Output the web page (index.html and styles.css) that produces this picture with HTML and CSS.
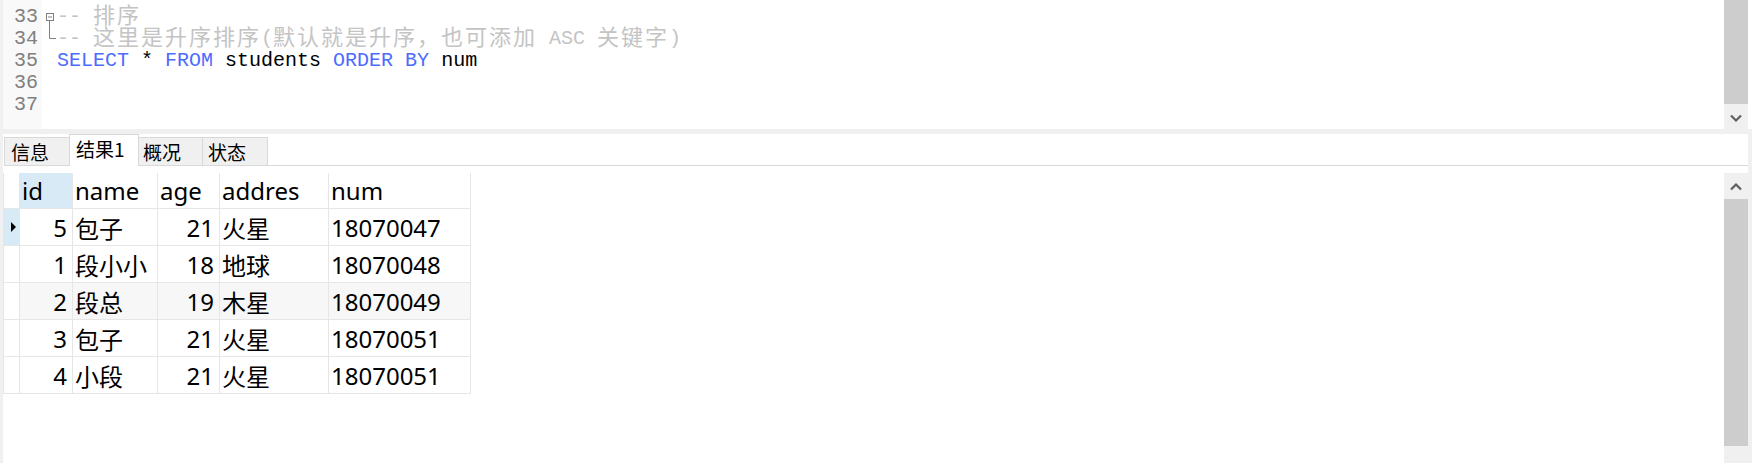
FILE: index.html
```html
<!DOCTYPE html>
<html lang="zh">
<head>
<meta charset="utf-8">
<title>Query</title>
<link rel="stylesheet" href="styles.css">
</head>
<body>
<div class="editor">
  <div class="editor-body">
    <div class="gutter">
      <div class="ln">32</div>
      <div class="ln">33</div>
      <div class="ln">34</div>
      <div class="ln">35</div>
      <div class="ln">36</div>
      <div class="ln">37</div>
    </div>
    <div class="folds">
      <div class="fl"></div>
      <div class="fl"><svg width="15" height="22" viewBox="0 0 15 22"><rect x="4.5" y="7.5" width="7" height="7" fill="#fff" stroke="#808080"/><line x1="6" y1="11" x2="10" y2="11" stroke="#808080"/><line x1="7.5" y1="15" x2="7.5" y2="22" stroke="#808080"/></svg></div>
      <div class="fl"><svg width="15" height="22" viewBox="0 0 15 22"><polyline points="7.5,0 7.5,10.5 14,10.5" fill="none" stroke="#808080"/></svg></div>
    </div>
    <div class="code">
      <div class="line"></div>
      <div class="line cm">-- <span class="cj">排序</span></div>
      <div class="line cm">-- <span class="cj">这里是升序排序</span>(<span class="cj">默认就是升序，也可添加</span> ASC <span class="cj">关键字</span>)</div>
      <div class="line"><span class="kw">SELECT</span> * <span class="kw">FROM</span> students <span class="kw">ORDER</span> <span class="kw">BY</span> num</div>
      <div class="line"></div>
      <div class="line"></div>
    </div>
  </div>
  <div class="vscroll">
    <div class="thumb thumb-top"></div>
    <div class="arrow arrow-down"><svg width="12" height="8" viewBox="0 0 12 8"><polyline points="1,1.5 6,6.5 11,1.5" fill="none" stroke="#606060" stroke-width="2.2"/></svg></div>
  </div>
  <div class="edge"></div>
</div>

<div class="lower">
  <div class="tabs">
    <div class="tab t1">信息</div>
    <div class="tab t2 active">结果1</div>
    <div class="tab t3">概况</div>
    <div class="tab t4">状态</div>
    <div class="tab-fill"></div>
  </div>
  <div class="results">
    <div class="grid-wrap">
      <div class="grid">
        <div class="row head">
          <div class="cell ind"></div>
          <div class="cell sel">id</div>
          <div class="cell">name</div>
          <div class="cell">age</div>
          <div class="cell">addres</div>
          <div class="cell">num</div>
        </div>
        <div class="row">
          <div class="cell ind cur"><svg width="15" height="36" viewBox="0 0 15 36"><polygon points="7,13 12,18 7,23" fill="#000"/></svg></div>
          <div class="cell num">5</div>
          <div class="cell">包子</div>
          <div class="cell num">21</div>
          <div class="cell">火星</div>
          <div class="cell">18070047</div>
        </div>
        <div class="row">
          <div class="cell ind"></div>
          <div class="cell num">1</div>
          <div class="cell">段小小</div>
          <div class="cell num">18</div>
          <div class="cell">地球</div>
          <div class="cell">18070048</div>
        </div>
        <div class="row alt">
          <div class="cell ind"></div>
          <div class="cell num">2</div>
          <div class="cell">段总</div>
          <div class="cell num">19</div>
          <div class="cell">木星</div>
          <div class="cell">18070049</div>
        </div>
        <div class="row">
          <div class="cell ind"></div>
          <div class="cell num">3</div>
          <div class="cell">包子</div>
          <div class="cell num">21</div>
          <div class="cell">火星</div>
          <div class="cell">18070051</div>
        </div>
        <div class="row">
          <div class="cell ind"></div>
          <div class="cell num">4</div>
          <div class="cell">小段</div>
          <div class="cell num">21</div>
          <div class="cell">火星</div>
          <div class="cell">18070051</div>
        </div>
      </div>
    </div>
    <div class="vscroll2">
      <div class="arrow arrow-up"><svg width="12" height="8" viewBox="0 0 12 8"><polyline points="1,6.5 6,1.5 11,6.5" fill="none" stroke="#606060" stroke-width="2.2"/></svg></div>
      <div class="thumb thumb-low"></div>
      <div class="track"></div>
    </div>
  </div>
</div>
</body>
</html>
```

FILE: styles.css
```css
* { box-sizing: border-box; }

html, body {
  margin: 0;
  padding: 0;
}

body {
  width: 1752px;
  height: 463px;
  overflow: hidden;
  background: #f0f0f0;
}

/* ---------- editor ---------- */
.editor {
  display: flex;
  height: 129px;
  margin-left: 3px;
  background: #ffffff;
  overflow: hidden;
}

.editor-body {
  flex: 1;
  display: flex;
  height: 145px;
  margin-top: -16px;
  font-family: "Liberation Mono", "Noto Sans CJK SC", monospace;
  font-size: 20px;
  line-height: 22px;
}

.gutter {
  width: 39px;
  padding-right: 4px;
  background: #f9f9f9;
  color: #808080;
  text-align: right;
}

.ln {
  height: 22px;
}

.folds {
  width: 15px;
}

.fl {
  height: 22px;
}

.fl svg {
  display: block;
}

.code {
  flex: 1;
  color: #000;
}

.line {
  height: 22px;
  white-space: pre;
}

.cm {
  color: #c4c4c4;
}

.cj {
  font-family: "Noto Sans CJK SC", sans-serif;
  font-size: 22px;
  letter-spacing: 2px;
  line-height: 0;
  vertical-align: -1px;
}

.kw {
  color: #4d6cff;
}

.vscroll {
  width: 24px;
  display: flex;
  flex-direction: column;
}

.thumb {
  background: #cdcdcd;
}

.thumb-top {
  height: 104px;
}

.arrow {
  display: flex;
  align-items: center;
  justify-content: center;
  background: #f0f0f0;
}

.arrow svg {
  display: block;
}

.arrow-down {
  flex: 1;
  padding-top: 2px;
}

.edge {
  width: 4px;
  background: #ffffff;
}

/* ---------- lower pane ---------- */
.lower {
  margin: 5px 4px 0 3px;
  height: 329px;
  background: #ffffff;
  display: flex;
  flex-direction: column;
}

.tabs {
  display: flex;
  align-items: flex-end;
  height: 32px;
  padding-left: 1px;
  font-family: "Noto Sans CJK SC", sans-serif;
  font-size: 19px;
  color: #000;
}

.tab {
  height: 29px;
  border: 1px solid #d9d9d9;
  background: #f0f0f0;
  display: flex;
  align-items: center;
  margin-right: -1px;
  white-space: nowrap;
}

.t1 { width: 66px; padding-left: 6px; }
.t2 { width: 70px; padding-left: 6px; }
.t3 { width: 65px; padding-left: 4px; }
.t4 { width: 66px; padding-left: 5px; }

.tab.active {
  height: 32px;
  background: #ffffff;
  border-bottom: none;
  padding-bottom: 5px;
}

.tab-fill {
  flex: 1;
  height: 32px;
  border-bottom: 1px solid #d9d9d9;
}

.results {
  flex: 1;
  display: flex;
  padding-top: 7px;
  min-height: 0;
}

.grid-wrap {
  flex: 1;
}

.grid {
  width: 468px;
  border-left: 1px solid #e6e6e6;
  font-family: "Noto Sans", "Noto Sans CJK SC", sans-serif;
  font-size: 24px;
  color: #000;
}

.row {
  display: grid;
  grid-template-columns: 16px 53px 85px 62px 109px 142px;
  height: 37px;
}

.row.head {
  height: 36px;
}

.cell {
  border-right: 1px solid #e6e6e6;
  border-bottom: 1px solid #e6e6e6;
  display: flex;
  align-items: center;
  padding-left: 2px;
  white-space: nowrap;
  overflow: hidden;
}

.cell.num {
  justify-content: flex-end;
  padding-left: 0;
  padding-right: 5px;
}

.cell.ind {
  padding: 0;
  background: #ffffff;
}

.cell.ind svg {
  display: block;
}

.cell.cur {
  background: #d9eaf7;
}

.cell.sel {
  background: #d9eaf7;
}

.row.alt .cell {
  background: #f7f7f7;
}

.row.alt .cell.ind {
  background: #ffffff;
}

.vscroll2 {
  width: 24px;
  display: flex;
  flex-direction: column;
}

.arrow-up {
  height: 26px;
  padding-top: 2px;
}

.thumb-low {
  height: 247px;
}

.track {
  flex: 1;
  background: #f0f0f0;
}
```
